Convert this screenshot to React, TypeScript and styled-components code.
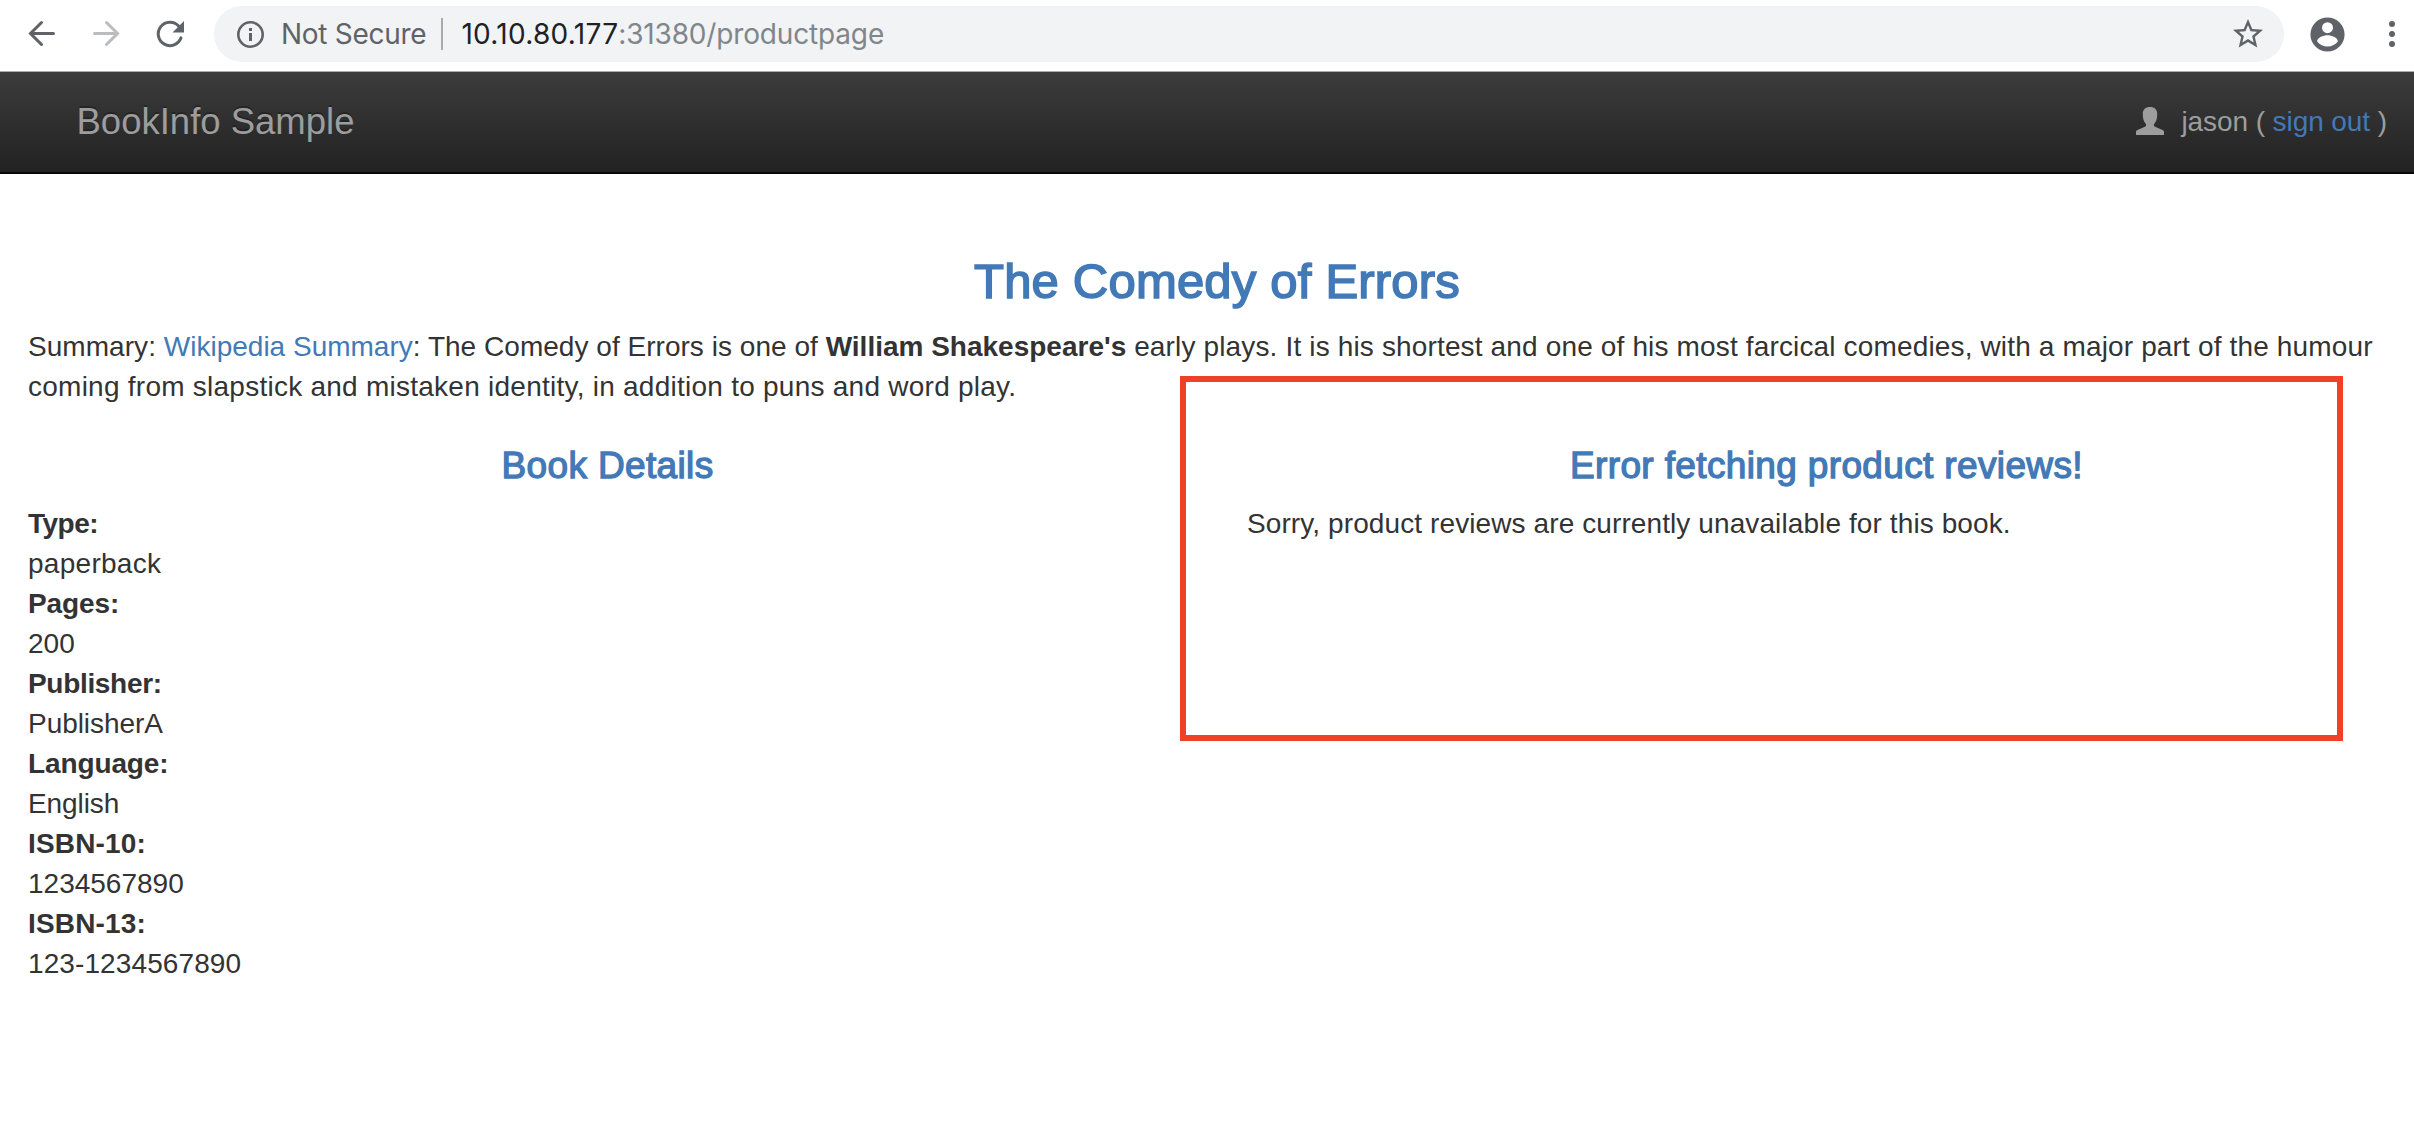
import React from 'react';
import styled, { createGlobalStyle } from 'styled-components';

const sans = '"Helvetica Neue", "Liberation Sans", Arial, sans-serif';
const chromeGrey = '#5f6368';
const blue = '#4279b6';

const GlobalStyle = createGlobalStyle`
  *, *::before, *::after { box-sizing: border-box; }
  body {
    margin: 0;
    background: #fff;
    color: #333;
    font-family: ${sans};
    font-size: 28px;
    line-height: 40px;
  }
`;

const Window = styled.div`
  position: relative;
  min-height: 1140px;
  overflow: hidden;
`;

/* Browser chrome */

const Toolbar = styled.div`
  display: flex;
  align-items: center;
  height: 72px;
  padding: 0 16px 3px 22px;
  border-bottom: 1px solid #a9adac;
`;

const NavButtons = styled.div`
  display: flex;
  gap: 24px;
  margin-right: 24px;
`;

const Icon = styled.svg`
  display: block;
  flex: none;
`;

const Omnibox = styled.div`
  display: flex;
  flex: 1;
  align-items: center;
  height: 56px;
  padding: 0 18px 0 22px;
  border-radius: 28px;
  background: #f1f3f4;
  font-family: Inter, Roboto, sans-serif;
  white-space: pre;
`;

const Security = styled.span`
  margin-left: 15px;
  color: ${chromeGrey};
  letter-spacing: -0.28px;
`;

const Divider = styled.span`
  width: 2px;
  height: 32px;
  margin: 0 18px 0 15px;
  background: #a8abae;
`;

const Host = styled.span`
  color: #202124;
  letter-spacing: 0.3px;
`;

const Path = styled.span`
  flex: 1;
  color: #80868b;
  letter-spacing: -0.16px;
`;

const ToolbarActions = styled.div`
  display: flex;
  align-items: center;
  gap: 38px;
  margin-left: 23px;
`;

/* Site header */

const Navbar = styled.nav`
  display: flex;
  align-items: center;
  justify-content: space-between;
  height: 102px;
  padding: 0 27px 0 76.5px;
  border-bottom: 2px solid #080808;
  background: linear-gradient(to bottom, #3c3c3c 0%, #222 100%);
  color: #9d9d9d;
`;

const Brand = styled.a`
  font-size: 36.5px;
  text-shadow: 0 -2px 0 rgba(0, 0, 0, 0.25);
`;

const User = styled.div`
  display: flex;
  align-items: center;
  gap: 17.5px;
  letter-spacing: -0.08px;
  white-space: pre;
`;

const Link = styled.a`
  color: ${blue};
`;

/* Page body */

const Content = styled.main`
  padding: 81px 8px 0 28px;
`;

const Title = styled.h3`
  margin: 0 0 19px;
  color: ${blue};
  font-size: 49px;
  font-weight: 400;
  line-height: 53px;
  letter-spacing: 0.2px;
  text-align: center;
  -webkit-text-stroke: 1.6px currentColor;
`;

const Summary = styled.p`
  margin: 0;
`;

const Run = styled.span<{ $track: number }>`
  letter-spacing: ${(p) => p.$track}px;
`;

const Columns = styled.div`
  display: grid;
  grid-template-columns: 1fr 1fr;
  column-gap: 60px;
  padding-top: 39px;
`;

const SectionTitle = styled.h4`
  margin: 0 0 18px;
  color: ${blue};
  font-size: 37px;
  font-weight: 400;
  line-height: 40px;
  letter-spacing: 0.36px;
  text-align: center;
  -webkit-text-stroke: 1.3px currentColor;
`;

const Details = styled.dl`
  margin: 0;
`;

const Term = styled.dt<{ $track: number }>`
  font-weight: 700;
  letter-spacing: ${(p) => p.$track}px;
`;

const Value = styled.dd<{ $track: number }>`
  margin: 0;
  letter-spacing: ${(p) => p.$track}px;
`;

const Message = styled.p`
  margin: 0;
  letter-spacing: 0.1px;
`;

/* Annotation frame drawn over the page */
const Highlight = styled.div`
  position: absolute;
  left: 1180px;
  top: 376px;
  width: 1163px;
  height: 365px;
  border: 6px solid #f04126;
  pointer-events: none;
`;

const BackIcon = ({ color }: { color: string }) => (
  <Icon width="40" height="40" viewBox="0 0 40 40" fill="none" stroke={color} strokeWidth="3" strokeLinecap="round">
    <path d="M31.5 19.5H9M19.5 8.5l-11 11 11 11" />
  </Icon>
);

const ForwardIcon = ({ color }: { color: string }) => (
  <Icon width="40" height="40" viewBox="0 0 40 40" fill="none" stroke={color} strokeWidth="3" strokeLinecap="round">
    <path d="M8.5 19.5H31M20.5 8.5l11 11-11 11" />
  </Icon>
);

const ReloadIcon = () => (
  <Icon width="40" height="40" viewBox="0 0 40 40">
    <path d="M28.6 12A11.7 11.7 0 1 0 31 23.8" fill="none" stroke={chromeGrey} strokeWidth="3" strokeLinecap="round" />
    <path d="M34 7v11.5H22.5z" fill={chromeGrey} />
  </Icon>
);

const InfoIcon = () => (
  <Icon width="30" height="30" viewBox="0 0 30 30">
    <circle cx="14.5" cy="15.5" r="12.2" fill="none" stroke={chromeGrey} strokeWidth="2.6" />
    <path d="M13 9h3v3h-3zM13 14h3v8h-3z" fill={chromeGrey} />
  </Icon>
);

const StarIcon = () => (
  <Icon width="36" height="36" viewBox="0 0 24 24" fill={chromeGrey}>
    <path d="M22 9.24l-7.19-.62L12 2 9.19 8.63 2 9.24l5.46 4.73L5.82 21 12 17.27 18.18 21l-1.63-7.03L22 9.24zM12 15.4l-3.76 2.27 1-4.28-3.32-2.88 4.38-.38L12 6.1l1.71 4.04 4.38.38-3.32 2.88 1 4.28L12 15.4z" />
  </Icon>
);

const AccountIcon = () => (
  <Icon width="41" height="41" viewBox="0 0 24 24" fill={chromeGrey}>
    <path
      fillRule="evenodd"
      d="M12 2a10 10 0 1 0 0 20 10 10 0 0 0 0-20zm0 2.8a3.2 3.2 0 1 1 0 6.4 3.2 3.2 0 0 1 0-6.4zm0 14.2c-2.6 0-4.8-1.2-6.1-3.1C6 13.7 9.7 12.4 12 12.4s6 1.3 6.1 3.5C16.8 17.8 14.6 19 12 19z"
    />
  </Icon>
);

const MenuIcon = () => (
  <Icon width="12" height="40" viewBox="0 0 12 40" fill={chromeGrey}>
    <circle cx="6" cy="10" r="3" />
    <circle cx="6" cy="20" r="3" />
    <circle cx="6" cy="30" r="3" />
  </Icon>
);

const GlyphUser = styled(Icon)`
  margin-bottom: 2px;
`;

const UserIcon = () => (
  <GlyphUser width="28" height="28" viewBox="0 0 28 28" fill="#9d9d9d">
    <path d="M14 0c4.6 0 7.200 2.700 7.200 6.500 0 4.300-.5 7.500-2.700 10-.6.7-.8 1.300-.6 1.900.2.700.9 1.100 1.800 1.500l6.800 3.100c1.100.5 1.500 1.100 1.500 2.100V28H0v-2.900c0-1 .4-1.600 1.500-2.100l6.800-3.100c.9-.4 1.600-.8 1.800-1.500.2-.6 0-1.200-.6-1.900-2.200-2.500-2.700-5.700-2.700-10C6.800 2.700 9.400 0 14 0z" />
  </GlyphUser>
);

const details = [
  { term: 'Type:', termTrack: -0.5, value: 'paperback', valueTrack: 0.28 },
  { term: 'Pages:', termTrack: -0.1, value: '200', valueTrack: 0 },
  { term: 'Publisher:', termTrack: -0.32, value: 'PublisherA', valueTrack: -0.05 },
  { term: 'Language:', termTrack: -0.12, value: 'English', valueTrack: -0.1 },
  { term: 'ISBN-10:', termTrack: 0.15, value: '1234567890', valueTrack: 0 },
  { term: 'ISBN-13:', termTrack: 0.15, value: '123-1234567890', valueTrack: 0.1 },
];

export default function App() {
  return (
    <Window>
      <GlobalStyle />
      <Toolbar>
        <NavButtons>
          <BackIcon color={chromeGrey} />
          <ForwardIcon color="#babcbe" />
          <ReloadIcon />
        </NavButtons>
        <Omnibox>
          <InfoIcon />
          <Security>Not Secure</Security>
          <Divider />
          <Host>10.10.80.177</Host>
          <Path>:31380/productpage</Path>
          <StarIcon />
        </Omnibox>
        <ToolbarActions>
          <AccountIcon />
          <MenuIcon />
        </ToolbarActions>
      </Toolbar>

      <Navbar>
        <Brand>BookInfo Sample</Brand>
        <User>
          <UserIcon />
          <span>
            jason ( <Link>sign out</Link> )
          </span>
        </User>
      </Navbar>

      <Content>
        <Title>The Comedy of Errors</Title>
        <Summary>
          <Run $track={0.05}>Summary: </Run>
          <Link>Wikipedia Summary</Link>
          <Run $track={0.03}>: The Comedy of Errors is one of </Run>
          <b>William Shakespeare's</b>
          <Run $track={0.15}>
            {' '}
            early plays. It is his shortest and one of his most farcical comedies, with a major part of the humour{' '}
          </Run>
          <Run $track={0.25}>coming from slapstick and mistaken identity, in addition to puns and word play.</Run>
        </Summary>

        <Columns>
          <section>
            <SectionTitle>Book Details</SectionTitle>
            <Details>
              {details.map((d) => (
                <React.Fragment key={d.term}>
                  <Term $track={d.termTrack}>{d.term}</Term>
                  <Value $track={d.valueTrack}>{d.value}</Value>
                </React.Fragment>
              ))}
            </Details>
          </section>
          <section>
            <SectionTitle>Error fetching product reviews!</SectionTitle>
            <Message>Sorry, product reviews are currently unavailable for this book.</Message>
          </section>
        </Columns>
      </Content>
      <Highlight />
    </Window>
  );
}
